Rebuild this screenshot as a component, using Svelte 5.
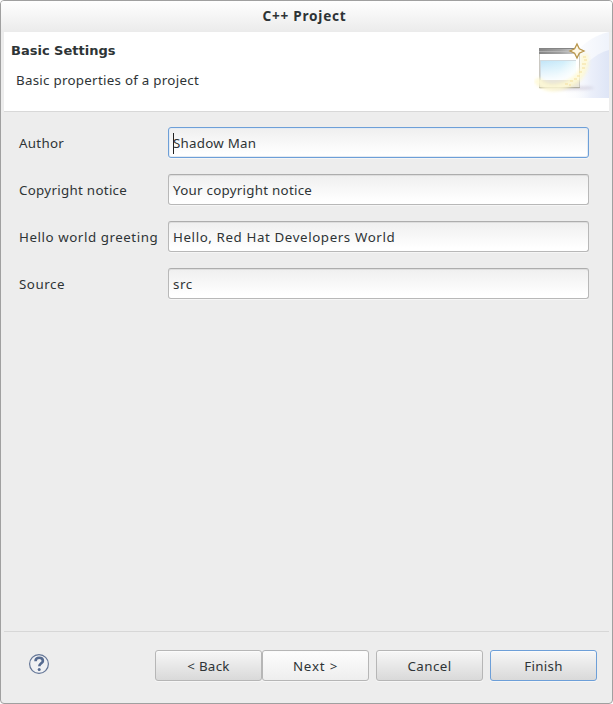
<script>
  const fields = [
    { label: 'Author', value: 'Shadow Man', focused: true, ls: 0.3, vs: 0.25 },
    { label: 'Copyright notice', value: 'Your copyright notice', ls: 0.3, vs: 0.27 },
    { label: 'Hello world greeting', value: 'Hello, Red Hat Developers World', ls: 0.56, vs: 0.6 },
    { label: 'Source', value: 'src', ls: 0.55, vs: 0.55 }
  ];
</script>

<main class="dialog">
  <header class="titlebar"><span>C++ Project</span></header>
  <section class="banner">
    <div class="copy">
      <h1>Basic Settings</h1>
      <p>Basic properties of a project</p>
    </div>
    <svg class="art" width="75" height="66" viewBox="0 0 75 66" aria-hidden="true">
      <defs>
        <linearGradient id="sweep" x1="0" y1="0" x2="1" y2="0">
          <stop offset="0.15" stop-color="#fff" stop-opacity="0" />
          <stop offset="0.6" stop-color="#ebeffa" />
          <stop offset="1" stop-color="#dee5f6" />
        </linearGradient>
        <linearGradient id="haze" x1="0" y1="0" x2="1" y2="0"><stop offset="0" stop-color="#f3f5fc" stop-opacity="0" /><stop offset="1" stop-color="#eff3fb" /></linearGradient>
        <linearGradient id="bar"><stop offset="0" stop-color="#858585" /><stop offset="0.5" stop-color="#a0a0a0" /><stop offset="1" stop-color="#d8d8d8" /></linearGradient>
        <linearGradient id="pane" x1="0" y1="0" x2="1" y2="0.3"><stop offset="0" stop-color="#c2e5f8" /><stop offset="0.6" stop-color="#cfeefb" /><stop offset="1" stop-color="#f4fdfd" /></linearGradient>
        <linearGradient id="fade" x1="0" y1="0" x2="0" y2="1"><stop offset="0" stop-color="#fff" stop-opacity="0" /><stop offset="1" stop-color="#fff" stop-opacity="0.9" /></linearGradient>
        <filter id="soft" x="-30%" y="-60%" width="160%" height="220%"><feGaussianBlur stdDeviation="1.6" /></filter>
      </defs>
      <path d="M75 0C62 3 53 9 46 16L30 66H75Z" fill="url(#haze)" />
      <path d="M75 18C60 22 49 34 40 45L30 66H75Z" fill="url(#sweep)" />
      <ellipse cx="36" cy="56" rx="24" ry="2" fill="#b9b0c4" opacity=".45" filter="url(#soft)" />
      <path d="M5.5 17H45.5V56H5.5Z" fill="#fff" stroke="#cbc9c3" />
      <path d="M5 16H46V22H5Z" fill="url(#bar)" />
      <path d="M5 16.5H42" stroke="#858585" />
      <path d="M5 19.5H42" stroke="#c4c4c4" opacity=".6" />
      <path d="M7 29H42V48H7Z" fill="url(#pane)" />
      <path d="M7 29H42V48H7Z" fill="url(#fade)" />
      <path d="M6 28.5H42M6.5 28V48" stroke="#c0cdd3" opacity=".7" />
      <path d="M6 48H45V55H6Z" fill="#e9e6da" />
      <path d="M5 55.5H46" stroke="#b0ad9f" stroke-width="1.2" />
      <path d="M3 47C9 57 21 57 32 53C45 48 54 37 50 22" fill="none" stroke="#fff8c9" stroke-width="8" opacity=".65" filter="url(#soft)" />
      <path d="M3 47C9 57 21 57 32 53C45 48 54 37 50 22" fill="none" stroke="#fffcdf" stroke-width="3" opacity=".65" filter="url(#soft)" />
      <path d="M31 52h3M36 49h3M35 53h2M40 47h3M43 44h3M45 40h3M48 36h3M48 32h4M50 28h3M49 25h3" stroke="#f3de9c" stroke-width="1.5" opacity=".65" />
      <path d="M43 12L45.3 16.8L50 19L45.3 21.2L43 26L40.6 21.2L36 19L40.6 16.8Z" fill="#fff9e8" stroke="#b9964b" stroke-width="1.3" />
    </svg>
  </section>

  <form class="form" onsubmit={(e) => e.preventDefault()}>
    {#each fields as f}
      <div class="row">
        <span class="label" style="letter-spacing:{f.ls}px">{f.label}</span>
        <div class="field" class:focused={f.focused}>
          {#if f.focused}<i class="caret"></i>{/if}
          <span style="letter-spacing:{f.vs}px">{f.value}</span>
        </div>
      </div>
    {/each}
  </form>

  <footer class="footer">
    <svg class="help" width="22" height="22" viewBox="0 0 22 22" aria-label="Help">
      <circle cx="11" cy="11" r="9.4" fill="#f0f1f3" stroke="#637596" stroke-width="1.2" />
      <path d="M7.5 8.2C7.6 5.6 9 4.8 11.2 4.8C13.4 4.8 14.9 6 14.9 7.9C14.9 10.2 11.3 10.5 11.3 13.3" fill="none" stroke="#566b90" stroke-width="2.6" />
      <circle cx="11.2" cy="16.4" r="1.5" fill="#566b90" />
    </svg>
    <div class="buttons">
      <div class="pair">
        <button>&lt; Back</button><button class="light">Next &gt;</button>
      </div>
      <button class="cancel">Cancel</button>
      <button class="default">Finish</button>
    </div>
  </footer>
</main>

<style>
  :global(body) { background: #fff; }
  .dialog {
    box-sizing: border-box;
    width: 613px;
    height: 704px;
    display: flex;
    flex-direction: column;
    border: 1px solid #a0a0a0;
    border-radius: 4px;
    overflow: hidden;
    background: #ededed;
    color: #2e3436;
    font: 13.33px/20px "Noto Sans", "Open Sans", sans-serif;
  }
  .titlebar {
    height: 31px;
    flex: none;
    display: flex;
    justify-content: center;
    align-items: center;
    padding: 0 4px 2px 0;
    box-sizing: border-box;
    background: linear-gradient(#fff, #ebebeb);
    font-weight: 700;
    font-size: 13.6px;
    letter-spacing: 0.75px;
  }
  .banner {
    height: 79px;
    flex: none;
    margin: 0 3px;
    display: flex;
    justify-content: space-between;
    background: #fff;
    border-bottom: 1px solid #d8d8d8;
  }
  .copy { padding: 9px 0 0 7px; }
  h1 { margin: 0; font: 700 13px/20px "DejaVu Sans", sans-serif; }
  p { margin: 9px 0 0 5px; letter-spacing: 0.28px; }
  .art { display: block; }
  .form { flex: 1; padding: 15px 23px 0 18px; }
  .row { display: flex; align-items: center; height: 31px; margin-bottom: 16px; }
  .label { width: 149px; flex: none; white-space: nowrap; padding-top: 1px; }
  .field {
    flex: 1;
    box-sizing: border-box;
    height: 31px;
    display: flex;
    align-items: center;
    padding: 1px 4px 0;
    border: 1px solid #b8b8b8;
    border-top-color: #adadad;
    border-radius: 3px;
    background: linear-gradient(#efefef, #fff 90%);
    box-shadow: inset 0 1px #dedede, 0 1px #f6f6f6;
  }
  .field.focused { border-color: #6d9fd8; box-shadow: inset 0 0 0 1px #e4ebf3, 0 1px #f6f6f6; }
  .caret { width: 1px; height: 21px; margin-right: -1px; background: #222; flex: none; }
  .footer {
    height: 72px;
    flex: none;
    box-sizing: border-box;
    margin: 0 3px;
    padding: 18px 12px 0 24px;
    display: flex;
    justify-content: space-between;
    border-top: 1px solid #d7d7d7;
  }
  .help { margin-top: 3px; }
  .buttons { display: flex; gap: 7px; }
  .pair { display: flex; }
  button {
    box-sizing: border-box;
    width: 107px;
    height: 31px;
    margin: 0;
    padding: 1px 0 0;
    border: 1px solid #b6b6b6;
    border-radius: 3px;
    background: linear-gradient(#f7f7f7, #d9d9d9);
    box-shadow: inset 0 1px #fbfbfb, 0 1px #f6f6f6;
    color: inherit;
    font: inherit;
    letter-spacing: 0.3px;
  }
  button.light { background: linear-gradient(#fdfdfd, #eee); letter-spacing: 0.8px; }
  button.cancel { letter-spacing: 0.45px; }
  button.default { border-color: #6d9fd8; }
</style>
